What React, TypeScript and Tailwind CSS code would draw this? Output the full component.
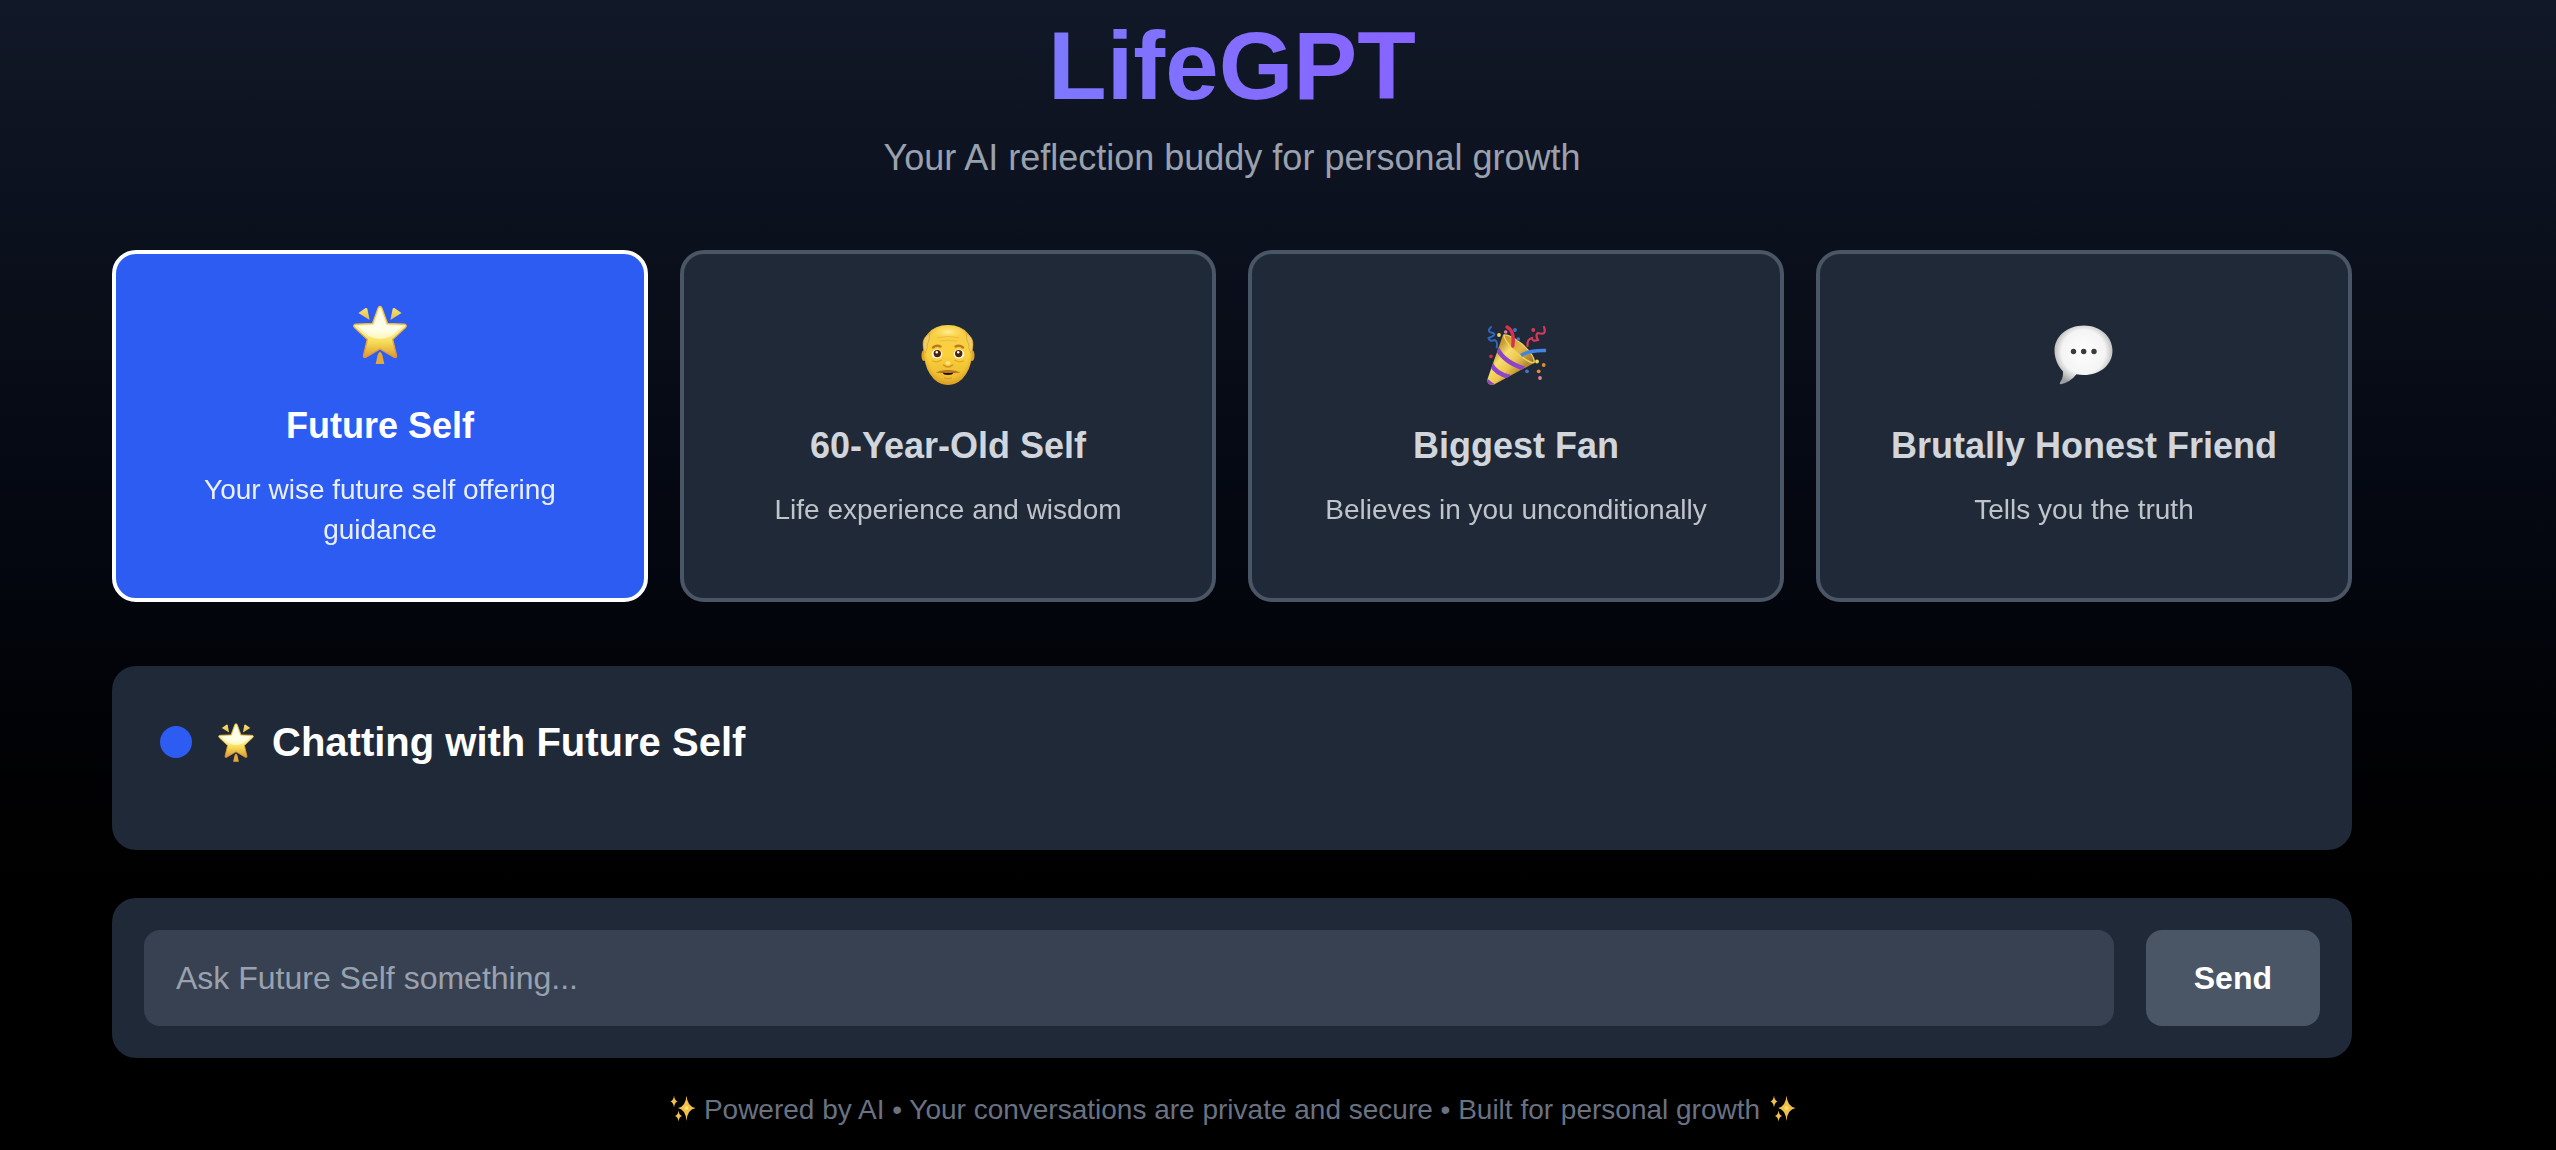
import React, { useState } from "react";

/*
  Personas the user can talk to
*/
type Persona = {
  id: string;
  name: string;
  description: string;
  Icon: React.FC<{ className?: string }>;
};

// ------------------------------------
// Icons
// ------------------------------------
const StarIcon: React.FC<{ className?: string }> = ({ className }) => (
  <svg viewBox="6 2 60 62" className={className} aria-hidden="true">
    <defs>
      <linearGradient id="starFill" x1="0" y1="0" x2="0" y2="1">
        <stop offset="0" stopColor="#fff6c8" />
        <stop offset="0.5" stopColor="#fbf0a0" />
        <stop offset="0.7" stopColor="#f6dc55" />
        <stop offset="1" stopColor="#dd9636" />
      </linearGradient>
      <linearGradient id="starEdge" x1="0" y1="0" x2="0" y2="1">
        <stop offset="0" stopColor="#efc850" />
        <stop offset="1" stopColor="#dc9433" />
      </linearGradient>
      <linearGradient id="starShine" x1="0" y1="0" x2="0" y2="1">
        <stop offset="0" stopColor="#fffef0" />
        <stop offset="0.7" stopColor="#fffee8" />
        <stop offset="1" stopColor="#fdf6b0" />
      </linearGradient>
      <linearGradient id="starRay" x1="0" y1="0" x2="0" y2="1">
        <stop offset="0" stopColor="#f6e377" />
        <stop offset="1" stopColor="#e3bd3f" />
      </linearGradient>
    </defs>
    <path d="M14.5 11 L21.5 6 Q23 5.5 23.4 7 L25.6 18 Z" fill="url(#starRay)" />
    <path d="M57.5 11 L50.5 6 Q49 5.5 48.6 7 L46.4 18 Z" fill="url(#starRay)" />
    <path
      d="M36 4.5 Q37.2 4.5 38 6.5 L43.5 21.5 L60.5 22.2 Q63.5 23 61.5 25.5 L48.7 37.5 L52.6 54 Q52.5 56.500 49.500 55 L36 47 L22.500 55 Q19.500 56.500 19.400 54 L23.300 37.500 L10.5 25.5 Q8.5 23 11.5 22.2 L28.5 21.5 L34 6.5 Q34.8 4.5 36 4.5 Z"
      fill="url(#starFill)"
      stroke="url(#starEdge)"
      strokeWidth="1.3"
      strokeLinejoin="round"
    />
    <path d="M36 7.5 L42 23 L58.500 24 L48 33.500 Q36 40.500 24 33.500 L13.500 24 L30 23 Z" fill="url(#starShine)" />
    <path d="M36 49.700 Q37.6 50.5 38.5 53.5 L40.3 62 L31.7 62 L33.5 53.5 Q34.4 50.5 36 49.700 Z" fill="#e3a73c" />
  </svg>
);

const OldManIcon: React.FC<{ className?: string }> = ({ className }) => (
  <svg viewBox="6 2 60 62" className={className} aria-hidden="true">
    <defs>
      <linearGradient id="faceFill" x1="0" y1="0" x2="0" y2="1">
        <stop offset="0" stopColor="#f7cf4a" />
        <stop offset="0.5" stopColor="#fad03c" />
        <stop offset="1" stopColor="#eab52c" />
      </linearGradient>
      <radialGradient id="faceShade" cx="0.5" cy="0.45" r="0.58">
        <stop offset="0.75" stopColor="#c98a1c" stopOpacity="0" />
        <stop offset="1" stopColor="#c98a1c" stopOpacity="0.7" />
      </radialGradient>
      <radialGradient id="faceTop" cx="0.5" cy="0.5" r="0.5">
        <stop offset="0" stopColor="#fff0a0" />
        <stop offset="1" stopColor="#fbd645" stopOpacity="0" />
      </radialGradient>
    </defs>
    {/* ears */}
    <ellipse cx="12" cy="33.500" rx="2.500" ry="5.500" fill="#dea329" />
    <ellipse cx="60" cy="33.500" rx="2.500" ry="5.500" fill="#dea329" />
    {/* head */}
    <path d="M36 3 Q49 3 56 11.500 Q60 16 60 27 Q60.500 42 54 52 Q47 63 36 63 Q25 63 18 52 Q11.500 42 12 27 Q12 16 16 11.500 Q23 3 36 3 Z" fill="url(#faceFill)" />
    <path d="M36 3 Q49 3 56 11.500 Q60 16 60 27 Q60.500 42 54 52 Q47 63 36 63 Q25 63 18 52 Q11.500 42 12 27 Q12 16 16 11.500 Q23 3 36 3 Z" fill="url(#faceShade)" />
    <ellipse cx="36" cy="10" rx="18" ry="7" fill="url(#faceTop)" />
    {/* hair on the sides */}
    <path d="M17.500 11.500 Q11 15 11 22 Q11 28 13 31 Q15.500 27 15.500 22 Q18 18 17.500 11.500 Z" fill="#f0cc62" stroke="#d19c30" strokeWidth="0.600" />
    <path d="M54.500 11.500 Q61 15 61 22 Q61 28 59 31 Q56.500 27 56.500 22 Q54 18 54.500 11.500 Z" fill="#f0cc62" stroke="#d19c30" strokeWidth="0.600" />
    <path d="M25 15.500 Q36 13.500 47 15.500 M27 19 Q36 17.500 45 19" stroke="#e9b937" strokeWidth="0.800" fill="none" />
    {/* brows */}
    <path d="M21 25.500 Q24.500 22.500 28.500 24.500" stroke="#b97a22" strokeWidth="2.400" fill="none" strokeLinecap="round" />
    <path d="M43.500 24.500 Q47.500 22.500 51 25.500" stroke="#b97a22" strokeWidth="2.400" fill="none" strokeLinecap="round" />
    {/* eyes */}
    <ellipse cx="25" cy="32" rx="5.300" ry="4.600" fill="#fffbe6" />
    <ellipse cx="47" cy="32" rx="5.300" ry="4.600" fill="#fffbe6" />
    <circle cx="25.300" cy="31.600" r="3.700" fill="#4a2412" />
    <circle cx="46.700" cy="31.600" r="3.700" fill="#4a2412" />
    <circle cx="24.800" cy="30.200" r="1.200" fill="#fff" />
    <circle cx="46.200" cy="30.200" r="1.200" fill="#fff" />
    <path d="M20 39 Q25 41.500 30 38 M42 38 Q47 41.500 52 39" stroke="#dea129" strokeWidth="1" fill="none" />
    {/* nose, moustache, mouth */}
    <path d="M31.500 43 Q36 47 40.500 43" stroke="#d1921f" strokeWidth="1.600" fill="none" strokeLinecap="round" />
    <ellipse cx="36" cy="41" rx="2.500" ry="1.800" fill="#fde686" />
    <path d="M23.500 50.500 Q29 47.500 36 48 Q43 47.500 48.500 50.500 Q42 51.500 36 51 Q30 51.500 23.500 50.500 Z" fill="#b97923" />
    <path d="M30.500 50.500 Q36 51.500 41.500 50.500 Q40.500 53 36 53 Q31.500 53 30.500 50.500 Z" fill="#1d0f08" />
    <path d="M32 56 Q36 57.500 40 56" stroke="#d4952a" strokeWidth="1" fill="none" />
  </svg>
);

const PartyIcon: React.FC<{ className?: string }> = ({ className }) => (
  <svg viewBox="6 2 60 62" className={className} aria-hidden="true">
    <defs>
      <linearGradient id="coneFill" gradientUnits="userSpaceOnUse" x1="14" y1="30" x2="38" y2="52">
        <stop offset="0" stopColor="#c79a35" />
        <stop offset="0.3" stopColor="#f8df6c" />
        <stop offset="0.65" stopColor="#ecc64e" />
        <stop offset="1" stopColor="#b58a31" />
      </linearGradient>
      <linearGradient id="coneInner" gradientUnits="userSpaceOnUse" x1="26" y1="14" x2="52" y2="42">
        <stop offset="0" stopColor="#c7982f" />
        <stop offset="0.5" stopColor="#e3ba47" />
        <stop offset="1" stopColor="#98712a" />
      </linearGradient>
      <clipPath id="coneClip">
        <path d="M23 13 Q36 20 54 41 L14 62.500 Q6.500 63.500 7.500 57 Z" />
      </clipPath>
    </defs>
    <path d="M23 13 Q36 20 54 41 L14 62.500 Q6.500 63.500 7.500 57 Z" fill="url(#coneFill)" />
    <g clipPath="url(#coneClip)" stroke="#8d44cc" fill="none">
      <path d="M17.500 27 Q24 40 44 46.500" strokeWidth="4.500" />
      <path d="M11 42 Q16 52 30 55" strokeWidth="4.500" />
      <path d="M5 57 Q9 61 14 64" strokeWidth="4" />
    </g>
    {/* cone opening */}
    <path d="M24 13 Q29 12 42 22 Q56 35 54 40.500 Q51 42 38 32 Q24 19 24 13 Z" fill="url(#coneInner)" stroke="#f3d261" strokeWidth="1.400" />
    <path d="M27 5 Q35 9 32.800 24" stroke="#d9304f" strokeWidth="3.400" fill="none" strokeLinecap="round" />
    <path d="M41 33.500 Q49 28 66 28.500" stroke="#4284e3" strokeWidth="3.400" fill="none" />
    <path d="M11 5 Q6 10 13 11 Q17 13 8.500 16 Q9 20 15 18 Q18 20 16.700 25.500" stroke="#2f66c0" strokeWidth="2" fill="none" strokeLinecap="round" />
    <path d="M64 5 Q67 14 58 11 Q55 13 58 18 Q52 20 52 16 Q47 17 47.500 24" stroke="#d53a5b" strokeWidth="2.200" fill="none" strokeLinecap="round" />
    <g>
      <circle cx="19" cy="13" r="1.900" fill="#f3d851" />
      <circle cx="25.700" cy="10" r="1.800" fill="#ee7fa3" />
      <circle cx="35" cy="8" r="1.900" fill="#3a75d4" />
      <circle cx="38.300" cy="17" r="1.800" fill="#3a75d4" />
      <circle cx="53.300" cy="8" r="1.900" fill="#d93a5c" />
      <circle cx="11" cy="34.300" r="1.900" fill="#c9304d" />
      <circle cx="57" cy="39.500" r="1.900" fill="#f3d851" />
      <circle cx="63.700" cy="43" r="1.900" fill="#e68a35" />
      <circle cx="58.700" cy="49.300" r="1.900" fill="#e68a35" />
      <circle cx="47" cy="49.300" r="1.900" fill="#3a75d4" />
      <circle cx="60" cy="56" r="1.900" fill="#e57ba0" />
    </g>
  </svg>
);

const SpeechIcon: React.FC<{ className?: string }> = ({ className }) => (
  <svg viewBox="6 2 60 62" className={className} aria-hidden="true">
    <defs>
      <radialGradient id="bubbleFill" cx="0.5" cy="0.45" r="0.58">
        <stop offset="0" stopColor="#ffffff" />
        <stop offset="0.65" stopColor="#f4f4f4" />
        <stop offset="1" stopColor="#9e9e9e" />
      </radialGradient>
    </defs>
    <path
      d="M36 3.500 C52 3.500 64.500 14.500 64.500 28.500 C64.500 43 52 53 36 53 Q31.500 53 28.500 52.300 Q22.500 60 13 62.300 Q11 62.500 12 60.500 Q15.500 55.500 15 49.500 C9.500 43.500 6.500 36 6.500 28.500 C6.500 14.500 19 3.500 36 3.500 Z"
      fill="url(#bubbleFill)"
    />
    <circle cx="25.500" cy="29.500" r="2.700" fill="#3b3b3b" />
    <circle cx="35.700" cy="29.500" r="2.700" fill="#3b3b3b" />
    <circle cx="46" cy="29.500" r="2.700" fill="#3b3b3b" />
  </svg>
);

const SparklesIcon: React.FC<{ className?: string }> = ({ className }) => (
  <svg viewBox="0 0 28 30" className={className} aria-hidden="true">
    <g fill="#f0bf4c">
      <path d="M18.500 0.500 Q19.300 11.500 27.500 13 Q19.300 14.500 18.500 26 Q17.700 14.500 10 13 Q17.700 11.500 18.500 0.500 Z" />
      <path d="M6 0.500 Q6.600 5.700 9.500 6.500 Q6.600 7.300 6 12.500 Q5.400 7.300 2.500 6.500 Q5.400 5.700 6 0.500 Z" />
      <path d="M10.500 15.500 Q11.100 20.200 14 21 Q11.100 21.800 10.500 26.500 Q9.900 21.800 7 21 Q9.900 20.200 10.500 15.500 Z" />
    </g>
    <circle cx="18.500" cy="13" r="2" fill="#ffe268" />
  </svg>
);

const personas: Persona[] = [
  {
    id: "future",
    name: "Future Self",
    description: "Your wise future self offering guidance",
    Icon: StarIcon,
  },
  {
    id: "sixty",
    name: "60-Year-Old Self",
    description: "Life experience and wisdom",
    Icon: OldManIcon,
  },
  {
    id: "fan",
    name: "Biggest Fan",
    description: "Believes in you unconditionally",
    Icon: PartyIcon,
  },
  {
    id: "honest",
    name: "Brutally Honest Friend",
    description: "Tells you the truth",
    Icon: SpeechIcon,
  },
];

const App: React.FC = () => {

  // Currently selected persona
  const [selected, setSelected] = useState<Persona>(personas[0]);

  // Text typed by the user
  const [message, setMessage] = useState("");

  const handleSubmit = (e: React.FormEvent) => {
    e.preventDefault();
    setMessage("");
  };

  return (
    <div className="min-h-screen bg-linear-to-b from-[#111827] via-[#03050c] via-55% to-black to-90% pr-[92px] font-['Liberation_Sans',Arial,sans-serif] text-white">
      <div className="mx-auto max-w-[2304px] px-8 pt-[18px] pb-4">

        {/* ============================= */}
        {/* HEADER */}
        {/* ============================= */}

        <header className="mb-16 text-center">
          <h1 className="mb-4 bg-linear-to-r from-blue-400 to-purple-600 bg-clip-text text-8xl font-bold text-transparent">
            LifeGPT
          </h1>
          <p className="text-4xl leading-14 text-[#99a1af]">
            Your AI reflection buddy for personal growth
          </p>
        </header>

        {/* ============================= */}
        {/* PERSONA CARDS */}
        {/* ============================= */}

        <div className="mb-16 grid grid-cols-4 gap-8">
          {personas.map((p) => (
            <button
              key={p.id}
              type="button"
              onClick={() => setSelected(p)}
              className={
                p.id === selected.id
                  ? "rounded-3xl border-4 border-white bg-[#2c5cf2] p-12 text-white"
                  : "rounded-3xl border-4 border-[#4a5565] bg-[#1f2937] p-12 text-[#d1d5dc]"
              }
            >
              <div className="mb-6 flex h-18 justify-center pt-[2px]">
                <p.Icon className="h-[62px] w-[60px]" />
              </div>
              <div className="mb-4 text-4xl leading-14 font-bold">{p.name}</div>
              <div className="text-[28px] leading-10 opacity-90">
                {p.description}
              </div>
            </button>
          ))}
        </div>

        {/* ============================= */}
        {/* CHAT PANEL */}
        {/* ============================= */}

        <section className="mb-12 rounded-3xl bg-[#1f2937] p-12">
          <div className="mb-8 flex items-center">
            <span className="mr-6 size-8 rounded-full bg-[#2c5cf2]" />
            <h2 className="flex items-center gap-4 text-[40px] leading-14 font-bold">
              <selected.Icon className="h-[41px] w-10" />
              Chatting with {selected.name}
            </h2>
          </div>
        </section>

        {/* ============================= */}
        {/* MESSAGE INPUT */}
        {/* ============================= */}

        <form
          onSubmit={handleSubmit}
          className="mb-8 flex gap-8 rounded-3xl bg-[#1f2937] p-8"
        >
          <input
            type="text"
            aria-label="Message"
            value={message}
            onChange={(e) => setMessage(e.target.value)}
            placeholder={`Ask ${selected.name} something...`}
            className="min-w-0 flex-1 rounded-2xl bg-[#374151] px-8 py-6 text-[32px] leading-12 text-white outline-none placeholder:text-[#99a1af]"
          />
          <button
            type="submit"
            className="rounded-2xl bg-[#4a5565] px-12 py-6 text-[32px] leading-12 font-bold text-white"
          >
            Send
          </button>
        </form>

        <footer className="flex items-center justify-center gap-2 text-[28px] leading-10 text-[#6a7282]">
          <SparklesIcon className="h-[30px] w-7" />
          Powered by AI • Your conversations are private and secure • Built for
          personal growth
          <SparklesIcon className="h-[30px] w-7" />
        </footer>
      </div>
    </div>
  );
};

export default App;
